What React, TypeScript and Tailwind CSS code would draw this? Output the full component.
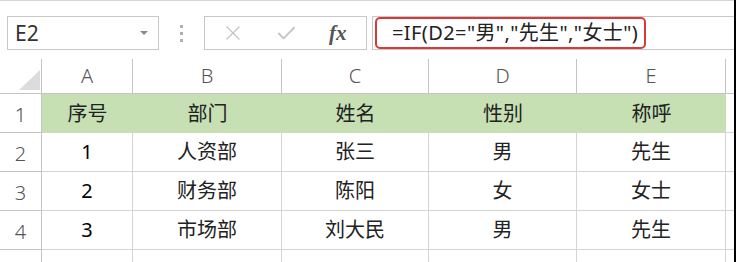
import { X, Check } from 'lucide-react';

const cols = ['A', 'B', 'C', 'D', 'E'];
const widths = ['w-[91px]', 'w-[149px]', 'w-[147px]', 'w-[148px]', 'w-[149px]'];

const header = ['序号', '部门', '姓名', '性别', '称呼'];
const rows = [
  ['1', '人资部', '张三', '男', '先生'],
  ['2', '财务部', '陈阳', '女', '女士'],
  ['3', '市场部', '刘大民', '男', '先生'],
];

const font = "font-['Noto_Sans','Noto_Sans_CJK_SC',sans-serif]";

function FormulaBar() {
  return (
    <div className="flex items-stretch h-[36px] mt-[15px]">
      <div className="ml-[7px] w-[152px] border border-[#c8c8c8] flex items-center justify-between pl-[7px] pr-[10px]">
        <span className="text-[21px] text-[#333] leading-none">E2</span>
        <span className="w-0 h-0 border-l-[4px] border-r-[4px] border-t-[4px] border-l-transparent border-r-transparent border-t-[#8a8a8a]" />
      </div>
      <div className="w-[45px] flex flex-col items-center justify-center gap-[4px]">
        <span className="w-[3px] h-[3px] bg-[#b0b0b0]" />
        <span className="w-[3px] h-[3px] bg-[#b0b0b0]" />
        <span className="w-[3px] h-[3px] bg-[#b0b0b0]" />
      </div>
      <div className="w-[163px] border border-[#c8c8c8] flex items-center pl-[16px]">
        <X size={24} strokeWidth={1.3} className="text-[#c4c4c4]" />
        <Check size={23} strokeWidth={1.9} className="text-[#c4c4c4] ml-[30px]" />
        <span className="ml-[31px] text-[21px] italic text-[#555] font-['Liberation_Serif',serif] font-bold leading-none">
          fx
        </span>
      </div>
      <div className="ml-[5px] flex-1 border-y border-l border-[#c8c8c8] flex items-center pl-[2px]">
        <div className="w-[271px] h-[32px] border-2 border-[#d83a3a] rounded-[5px] flex items-center pl-[15px]">
          <span className="text-[20px] tracking-[0.4px] text-[#222] leading-none whitespace-nowrap">
            =IF(D2="男","先生","女士")
          </span>
        </div>
      </div>
    </div>
  );
}

export default function App() {
  return (
    <div className={`w-[736px] h-[262px] bg-white overflow-hidden flex ${font}`}>
      <div className="w-[734px] flex flex-col">
        <div className="h-[2px] border-b border-[#d4d4d4]" />
        <FormulaBar />
        <div className="mt-[9px] flex flex-col">
          <div className="flex h-[35px]">
            <div className="w-[42px] border-r border-b border-[#c4c4c4] flex items-end justify-end pr-[1px] pb-[3px]">
              <span className="w-[21px] h-[20px] bg-[#dcdcdc] [clip-path:polygon(100%_0,100%_100%,0_100%)]" />
            </div>
            {cols.map((c, i) => (
              <div
                key={c}
                className={`${widths[i]} border-r border-b border-[#c4c4c4] flex items-center justify-center text-[20px] text-[#555] font-light`}
              >
                {c}
              </div>
            ))}
            <div className="flex-1 border-b border-[#c4c4c4]" />
          </div>
          <div className="flex h-[39px]">
            <div className="w-[42px] border-r border-b border-[#c4c4c4] flex items-end justify-center pb-[2px] text-[20px] text-[#555] font-light">
              1
            </div>
            <div className="w-[684px] bg-[#c6e0b4] flex">
              {header.map((h, i) => (
                <div key={h} className={`${widths[i]} flex items-center justify-center text-[20px] text-[#222]`}>
                  {h}
                </div>
              ))}
            </div>
            <div className="flex-1 border-b border-[#d4d4d4]" />
          </div>
          {rows.map((r, ri) => (
            <div key={ri} className="flex h-[39px]">
              <div className="w-[42px] border-r border-b border-[#c4c4c4] flex items-end justify-center pb-[2px] text-[20px] text-[#555] font-light">
                {ri + 2}
              </div>
              {r.map((v, i) => (
                <div
                  key={i}
                  className={`${widths[i]} border-r border-b border-[#d4d4d4] flex items-center justify-center text-[20px] ${i === 0 ? 'text-black' : 'text-[#222]'}`}
                >
                  {v}
                </div>
              ))}
              <div className="flex-1 border-b border-[#d4d4d4]" />
            </div>
          ))}
          <div className="flex h-[12px]">
            <div className="w-[42px] border-r border-[#c4c4c4]" />
            {cols.map((c, i) => (
              <div key={c} className={`${widths[i]} border-r border-[#d4d4d4]`} />
            ))}
          </div>
        </div>
      </div>
      <div className="w-[2px] bg-black" />
    </div>
  );
}
